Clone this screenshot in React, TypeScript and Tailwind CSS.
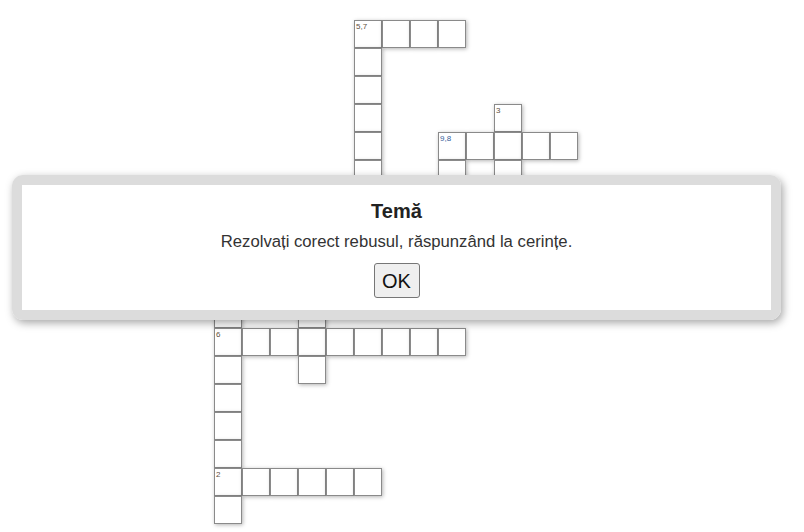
import React from "react"

const COLS = 13
const ROWS = 18

// [row, col, label?]
const CELLS: [number, number, string?][] = [
  [0, 5, "5,7"], [0, 6], [0, 7], [0, 8],
  [1, 5], [2, 5], [3, 5], [4, 5], [5, 5], [6, 5], [7, 5],
  [3, 10, "3"],
  [4, 8, "9,8"], [4, 9], [4, 10], [4, 11], [4, 12],
  [5, 8], [5, 10], [6, 8], [6, 10], [7, 10],
  [9, 0], [9, 3],
  [10, 0], [10, 3],
  [11, 0, "6"], [11, 1], [11, 2], [11, 3], [11, 4], [11, 5], [11, 6], [11, 7], [11, 8],
  [12, 0], [12, 3],
  [13, 0], [14, 0], [15, 0],
  [16, 0, "2"], [16, 1], [16, 2], [16, 3], [16, 4], [16, 5],
  [17, 0],
]

const cellMap = new Map<string, string>()
CELLS.forEach(([r, c, label]) => cellMap.set(`${r}-${c}`, label ?? ""))

function Cell({ label }: { label: string }) {
  return (
    <div className="relative h-[28px] w-[28px] border border-[#8a8a8a] bg-white shadow-[1px_1px_4px_rgba(0,0,0,0.3)]">
      {label && (
        <span
          className={
            "absolute left-[1px] top-[1px] text-[8px] leading-[9px] " +
            (label === "9,8" ? "text-[#35609a]" : "text-[#5e5040]")
          }
        >
          {label}
        </span>
      )}
    </div>
  )
}

export default function App() {
  return (
    <div className="relative min-h-[532px] bg-white font-['Liberation_Sans',Arial,sans-serif] text-[#222]">
      <div className="pl-[214px] pt-[20px]">
        <div className="grid grid-cols-[repeat(13,28px)] grid-rows-[repeat(18,28px)]">
          {Array.from({ length: ROWS * COLS }, (_, i) => {
            const r = Math.floor(i / COLS)
            const c = i % COLS
            const key = `${r}-${c}`
            return cellMap.has(key) ? <Cell key={key} label={cellMap.get(key)!} /> : <div key={key} />
          })}
        </div>
      </div>

      <div className="absolute left-[12px] top-[175px] w-[769px] rounded-[11px] border-[10px] border-[#dcdcdc] shadow-[2px_3px_8px_rgba(0,0,0,0.35)]">
        <div className="flex flex-col items-center bg-white pb-[12px] pt-[14px]">
          <h2 className="text-[20px] font-bold leading-[24px] text-[#222]">Temă</h2>
          <p className="mt-[10px] text-[16.7px] leading-[18px] text-[#333]">
            Rezolvați corect rebusul, răspunzând la cerințe.
          </p>
          <button className="mt-[12px] h-[35px] w-[46px] rounded-[3px] border border-[#767676] bg-[#efefef] text-[20px] leading-none text-[#111]">
            OK
          </button>
        </div>
      </div>
    </div>
  )
}
